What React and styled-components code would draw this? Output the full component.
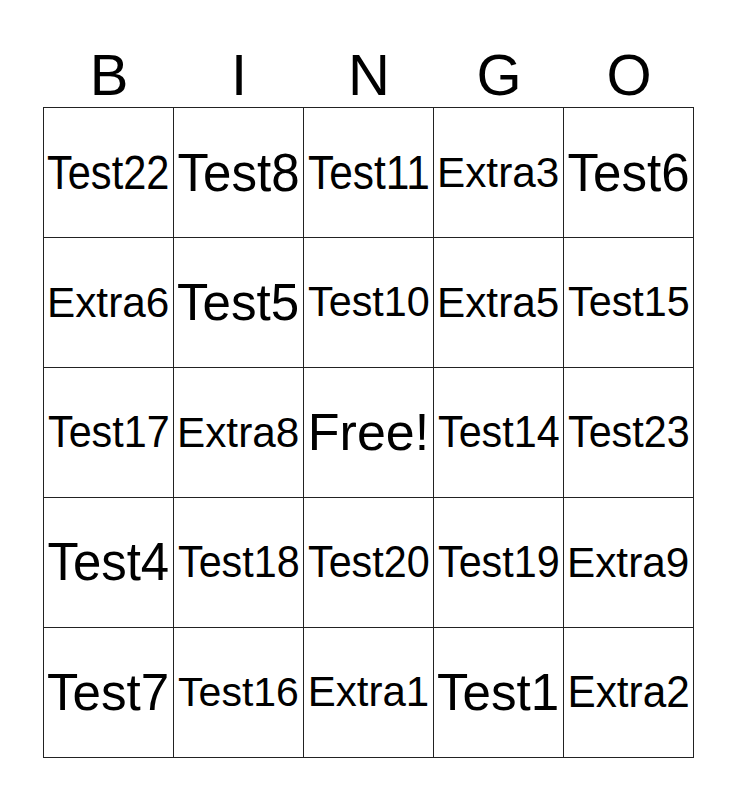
import React, { useLayoutEffect, useRef, useState } from 'react';
import styled, { createGlobalStyle } from 'styled-components';

const GlobalStyle = createGlobalStyle`
  html, body {
    margin: 0;
    padding: 0;
    background: #fff;
  }
  body {
    font-family: "Liberation Sans", Arial, sans-serif;
    color: #000;
  }
`;

const Page = styled.div`
  padding: 42px 0 0 43px;
`;

const Header = styled.div`
  display: grid;
  grid-template-columns: repeat(5, 130px);
  padding-left: 1px;
  font-size: 58px;
  line-height: 65px;
`;

const Letter = styled.div`
  text-align: center;
`;

const Board = styled.div`
  display: grid;
  grid-template-columns: repeat(5, 130px);
  grid-auto-rows: 130px;
  width: max-content;
  border-left: 1px solid #222;
  border-top: 1px solid #222;
`;

const Cell = styled.div`
  box-sizing: border-box;
  border-right: 1px solid #222;
  border-bottom: 1px solid #222;
  display: flex;
  align-items: center;
  justify-content: center;
  overflow: hidden;
`;

const Word = styled.span`
  display: inline-block;
  white-space: nowrap;
  font-size: ${(props) => props.size}px;
  line-height: 1.15;
  transform-origin: center;
`;

// [text, font size] per cell, row by row
const cells = [
  ['Test22', 49], ['Test8', 54], ['Test11', 48], ['Extra3', 43], ['Test6', 54],
  ['Extra6', 43], ['Test5', 52], ['Test10', 42], ['Extra5', 43], ['Test15', 42],
  ['Test17', 44], ['Extra8', 43], ['Free!', 52], ['Test14', 44], ['Test23', 44],
  ['Test4', 53], ['Test18', 44], ['Test20', 44], ['Test19', 44], ['Extra9', 43],
  ['Test7', 52], ['Test16', 41], ['Extra1', 42], ['Test1', 52], ['Extra2', 44],
];

const FitText = ({ text, size }) => {
  const ref = useRef(null);
  const [scale, setScale] = useState(1);

  useLayoutEffect(() => {
    const w = ref.current.offsetWidth;
    setScale(Math.min(1, 122 / w));
  }, [text, size]);

  return (
    <Word ref={ref} size={size} style={{ transform: `scaleX(${scale})` }}>
      {text}
    </Word>
  );
};

const App = () => {
  return (
    <Page>
      <GlobalStyle />
      <Header>
        {['B', 'I', 'N', 'G', 'O'].map((l) => (
          <Letter key={l}>{l}</Letter>
        ))}
      </Header>
      <Board>
        {cells.map(([text, size], i) => (
          <Cell key={i}>
            <FitText text={text} size={size} />
          </Cell>
        ))}
      </Board>
    </Page>
  );
};

export default App;
